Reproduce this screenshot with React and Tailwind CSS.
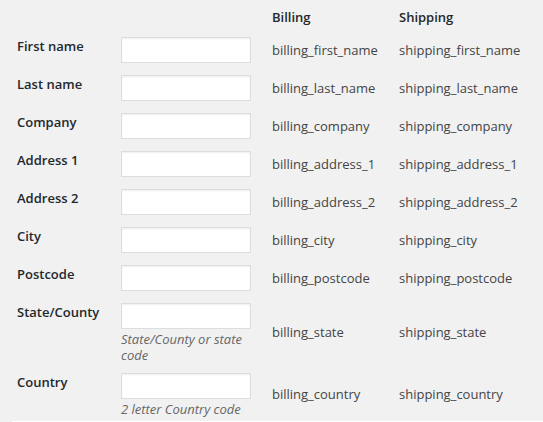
const fields = [
  { label: "First name", key: "first_name" },
  { label: "Last name", key: "last_name" },
  { label: "Company", key: "company" },
  { label: "Address 1", key: "address_1" },
  { label: "Address 2", key: "address_2" },
  { label: "City", key: "city" },
  { label: "Postcode", key: "postcode" },
  { label: "State/County", key: "state", description: "State/County or state code" },
  { label: "Country", key: "country", description: "2 letter Country code" },
]

function FieldRow({ field }) {
  return (
    <tr>
      <th className="w-[121px] pl-[17px] pt-[6px] pb-[6px] text-left align-top text-[13px] leading-[19px] font-semibold text-[#23282d]">
        {field.label}
      </th>
      <td className="w-[151px] py-[6px] align-top">
        <input
          type="text"
          className="block w-[130px] h-[26px] border border-[#dddddd] bg-white shadow-[inset_0_1px_2px_rgba(0,0,0,0.07)] outline-none"
        />
        {field.description && (
          <p className="mt-[2px] -mb-[2px] w-[130px] text-[13px] leading-[16px] italic text-[#666666]">
            {field.description}
          </p>
        )}
      </td>
      <td className="w-[127px] py-[6px] align-middle text-[13px] leading-[19px] text-[#444444]">
        billing_{field.key}
      </td>
      <td className="py-[6px] align-middle text-[13px] leading-[19px] text-[#444444]">
        shipping_{field.key}
      </td>
    </tr>
  )
}

export default function App() {
  return (
    <div className="w-[543px] h-[422px] bg-[#f1f1f1] overflow-hidden font-['Open_Sans',sans-serif]">
      <table className="border-collapse table-fixed w-[543px]">
        <thead>
          <tr>
            <th className="w-[121px]"></th>
            <th className="w-[151px]"></th>
            <th className="w-[127px] pt-[8px] pb-[4px] text-left text-[13px] leading-[19px] font-semibold text-[#23282d]">
              Billing
            </th>
            <th className="pt-[8px] pb-[4px] text-left text-[13px] leading-[19px] font-semibold text-[#23282d]">
              Shipping
            </th>
          </tr>
        </thead>
        <tbody>
          {fields.map((field) => (
            <FieldRow key={field.key} field={field} />
          ))}
        </tbody>
      </table>
      <div className="ml-[12px] h-[1px] bg-white"></div>
    </div>
  )
}
